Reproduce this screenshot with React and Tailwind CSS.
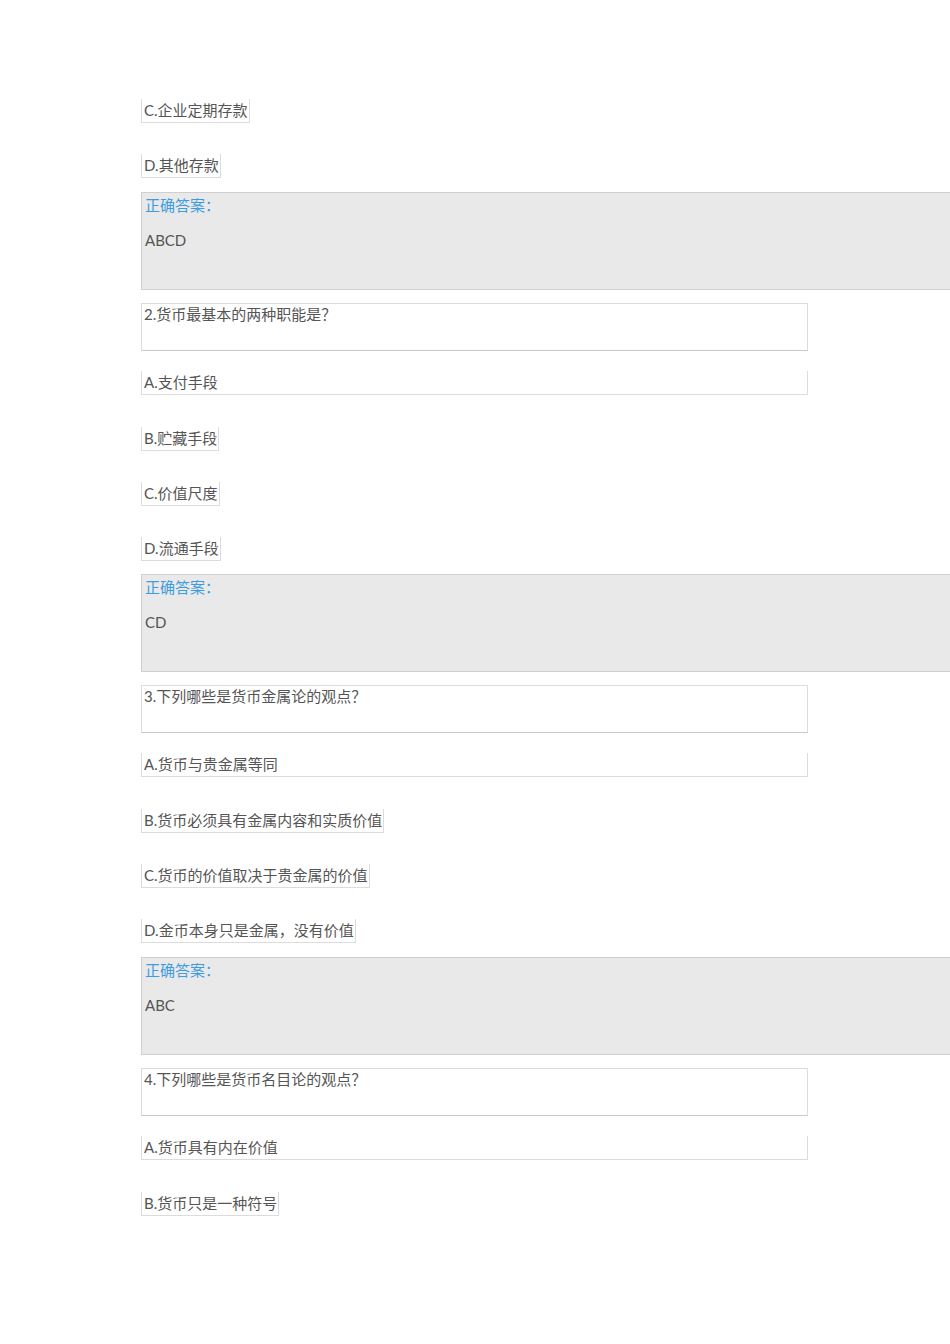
const F = { fontFamily: 'Lato, "Noto Sans CJK SC", sans-serif' };

function Opt({ label, text, full }) {
  return (
    <div className="h-[55px]">
      <div className={`h-[24px] border border-[#dcdcdc] border-t-0 pl-[2px] pr-[1px] leading-[22px] text-[15px] text-[#555] ${full ? "w-[667px]" : "inline-block"}`}>
        <span>{label}.</span>{text}
      </div>
    </div>
  );
}

function Answer({ ans }) {
  return (
    <div className="h-[98px] w-[809px] bg-[#e9e9e9] border border-[#cfcfcf] border-r-0 pl-[3px] mb-[13px]">
      <div className="text-[#3d9be0] text-[15px] leading-[22px] mt-[1px]">正确答案：</div>
      <div className="text-[#555] text-[15px] mt-[13px]">{ans}</div>
    </div>
  );
}

function Q({ text }) {
  return (
    <div className="h-[48px] w-[667px] border border-[#dcdcdc] border-b-[#c8c8c8] border-b-dashed pl-[2px] text-[15px] text-[#555] leading-[18px] pt-[1px] mb-[20px]">
      {text}
    </div>
  );
}

export default function App() {
  return (
    <div style={F} className="w-[950px] h-[1344px] bg-white overflow-hidden pl-[141px] pt-[98px]">
      <Opt label="C" text="企业定期存款" />
      <div className="h-[39px]"><Opt label="D" text="其他存款" /></div>
      <Answer ans="ABCD" />
      <Q text="2.货币最基本的两种职能是？" />
      <Opt label="A" text="支付手段" full />
      <Opt label="B" text="贮藏手段" />
      <Opt label="C" text="价值尺度" />
      <div className="h-[38px]"><Opt label="D" text="流通手段" /></div>
      <Answer ans="CD" />
      <Q text="3.下列哪些是货币金属论的观点？" />
      <Opt label="A" text="货币与贵金属等同" full />
      <Opt label="B" text="货币必须具有金属内容和实质价值" />
      <Opt label="C" text="货币的价值取决于贵金属的价值" />
      <div className="h-[39px]"><Opt label="D" text="金币本身只是金属，没有价值" /></div>
      <Answer ans="ABC" />
      <Q text="4.下列哪些是货币名目论的观点？" />
      <Opt label="A" text="货币具有内在价值" full />
      <Opt label="B" text="货币只是一种符号" />
    </div>
  );
}
